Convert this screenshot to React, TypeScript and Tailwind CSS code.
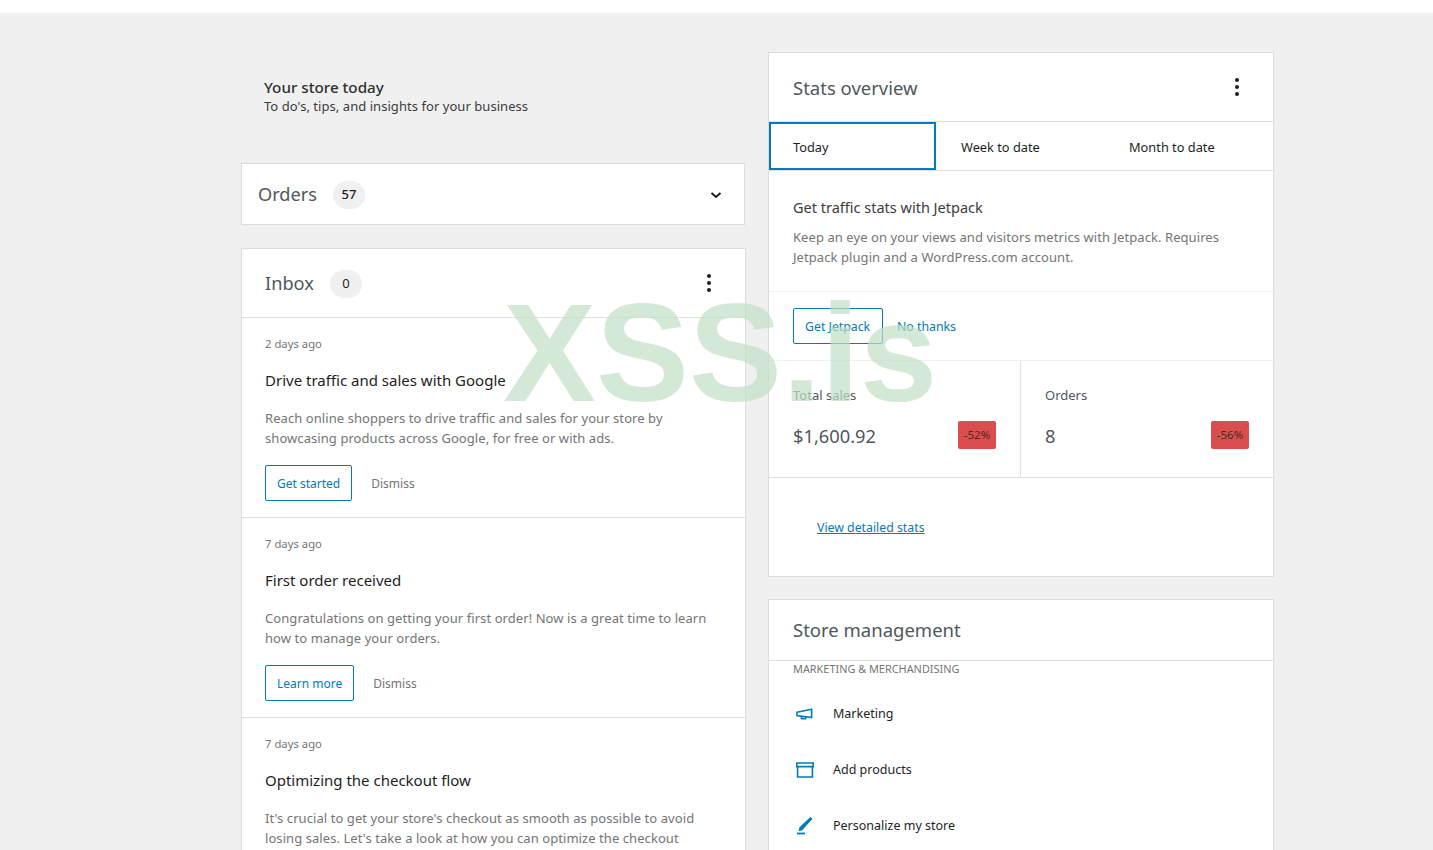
const font = "font-['Noto_Sans','Open_Sans',sans-serif]";

function Kebab() {
  return (
    <div className="flex flex-col gap-[3px] items-center w-6">
      <span className="w-1 h-1 rounded-full bg-[#1e1e1e]" />
      <span className="w-1 h-1 rounded-full bg-[#1e1e1e]" />
      <span className="w-1 h-1 rounded-full bg-[#1e1e1e]" />
    </div>
  );
}

function Note({ age, title, body, action, last }: { age: string; title: string; body: string[]; action?: string; last?: boolean }) {
  return (
    <div className={`h-[200px] pl-[23px] pr-6 pt-[18px] ${last ? "" : "border-b border-[#e0e0e0]"}`}>
      <p className="text-[11.3px] leading-4 text-[#757575]">{age}</p>
      <h3 className="mt-[16px] text-[15px] leading-6 text-[#1e1e1e]">{title}</h3>
      <div className="mt-[16px] text-[13px] tracking-[0.07px] leading-5 text-[#757575]">
        {body.map((line) => (
          <p key={line} className="whitespace-nowrap">{line}</p>
        ))}
      </div>
      {action && (
        <div className="mt-[17px] flex items-center gap-[19px] text-[12px]">
          <a className="h-9 px-[11px] pt-[2px] flex items-center border border-[#007cba] rounded-[2px] text-[#007cba]">{action}</a>
          <a className="pt-[2px] text-[#757575]">Dismiss</a>
        </div>
      )}
    </div>
  );
}

function Stat({ label, value, delta, first }: { label: string; value: string; delta: string; first?: boolean }) {
  return (
    <div className={`h-[116px] px-6 pt-[24px] ${first ? "w-[252px] border-r border-[#e0e0e0]" : "flex-1"}`}>
      <p className="text-[13px] leading-5 text-[#50575e]">{label}</p>
      <div className="mt-[15px] flex items-center justify-between">
        <span className="pt-[2px] text-[18.3px] leading-7 text-[#50575e]">{value}</span>
        <span className="w-[38px] h-7 rounded-[2px] bg-[#db4e50] text-[11.5px] text-[#50281f] flex items-center justify-center">{delta}</span>
      </div>
    </div>
  );
}

function MegaphoneIcon() {
  return (
    <svg width="18" height="12" viewBox="0 0 18 12" fill="none" stroke="#007cba" strokeWidth="1.6">
      <path d="M1 4.2 15.6 1.2V9.6L1 7.6Z" />
      <path d="M5 8.2 5.6 10.6H9.6L10 8.8" />
    </svg>
  );
}

function ArchiveIcon() {
  return (
    <svg width="18" height="16" viewBox="0 0 18 16" fill="none" stroke="#007cba" strokeWidth="1.6">
      <path d="M0.8 1H17.2V4.6H0.8Z" />
      <path d="M1.6 4.6V15H16.4V4.6" />
    </svg>
  );
}

function BrushIcon() {
  return (
    <svg width="16" height="18" viewBox="0 0 16 18" fill="#007cba">
      <path d="M13.4 0 15.6 1.8 7.6 10.6 5.4 13.2 1.6 14.2 2.4 10.4 4.8 8Z" />
      <rect x="0" y="15.6" width="8" height="1.8" />
    </svg>
  );
}

function ManageItem({ icon, label }: { icon: React.ReactNode; label: string }) {
  return (
    <div className="h-14 pl-[27px] flex items-center">
      <div className="w-[18px] flex justify-center">{icon}</div>
      <span className="ml-[19px] text-[12.5px] text-[#1e1e1e]">{label}</span>
    </div>
  );
}

export default function App() {
  return (
    <div className={`relative h-[850px] w-full overflow-hidden bg-[#f0f0f0] ${font}`}>
      <div className="h-[13px] bg-white" />

      <div className="ml-[241px] mt-[39px] flex gap-[22px] items-start">
        {/* left column */}
        <div className="w-[505px]">
          <div className="h-[111px] pl-[23px] pt-[25px]">
            <h2 className="text-[15.2px] leading-5 font-medium text-[#2f2f2f]">Your store today</h2>
            <p className="text-[13px] tracking-[0.05px] leading-[18px] text-[#3c3c3c]">To do's, tips, and insights for your business</p>
          </div>

          <div className="w-[504px] h-[62px] pt-[2px] bg-white border border-[#dcdcde] flex items-center pl-4 pr-4 justify-between">
            <div className="flex items-center gap-4">
              <span className="text-[18.2px] text-[#50575e]">Orders</span>
              <span className="w-8 h-7 rounded-full bg-[#f0f0f0] text-[13px] font-medium text-[#1e1e1e] flex items-center justify-center">57</span>
            </div>
            <svg width="24" height="24" viewBox="0 0 24 24" fill="none" stroke="#1e1e1e" strokeWidth="2">
              <path d="M7.5 10 12 14l4.5-4" />
            </svg>
          </div>

          <div className="mt-[23px] bg-white border border-[#dcdcde]">
            <div className="h-[69px] pl-[23px] pr-6 border-b border-[#e0e0e0] flex items-center justify-between">
              <div className="flex items-center gap-4">
                <span className="pt-[1px] text-[18.2px] text-[#50575e]">Inbox</span>
                <span className="mt-[2px] w-8 h-7 rounded-full bg-[#f0f0f0] text-[13px] text-[#1e1e1e] flex items-center justify-center">0</span>
              </div>
              <Kebab />
            </div>
            <Note
              age="2 days ago"
              title="Drive traffic and sales with Google"
              body={["Reach online shoppers to drive traffic and sales for your store by", "showcasing products across Google, for free or with ads."]}
              action="Get started"
            />
            <Note
              age="7 days ago"
              title="First order received"
              body={["Congratulations on getting your first order! Now is a great time to learn", "how to manage your orders."]}
              action="Learn more"
            />
            <Note
              age="7 days ago"
              title="Optimizing the checkout flow"
              body={["It's crucial to get your store's checkout as smooth as possible to avoid", "losing sales. Let's take a look at how you can optimize the checkout"]}
              last
            />
          </div>
        </div>

        {/* right column */}
        <div className="w-[506px]">
          <div className="bg-white border border-[#dcdcde]">
            <div className="h-[69px] px-6 pt-[2px] flex items-center justify-between border-b border-[#e0e0e0]">
              <h2 className="text-[18.5px] text-[#50575e]">Stats overview</h2>
              <div className="-mt-[2px]">
                <Kebab />
              </div>
            </div>
            <div className="h-[49px] flex border-b border-[#e0e0e0] text-[12.8px] text-[#1e1e1e]">
              <div className="w-[167px] border-2 border-[#007cba] pl-[22px] pt-[3px] flex items-center">Today</div>
              <div className="w-[168px] pl-[25px] pt-[3px] flex items-center">Week to date</div>
              <div className="flex-1 pl-[25px] pt-[3px] flex items-center">Month to date</div>
            </div>
            <div className="h-[121px] px-6 pt-[24px] border-b border-[#f0f0f0]">
              <h3 className="text-[14.5px] leading-6 text-[#3c3c3c]">Get traffic stats with Jetpack</h3>
              <p className="mt-[8px] text-[13px] tracking-[0.07px] leading-5 text-[#757575]">
                <span className="block whitespace-nowrap">Keep an eye on your views and visitors metrics with Jetpack. Requires</span>
                <span className="block whitespace-nowrap">Jetpack plugin and a WordPress.com account.</span>
              </p>
            </div>
            <div className="h-[69px] px-6 flex items-center gap-[14px] border-b border-[#f0f0f0] text-[12.3px] text-[#007cba]">
              <a className="h-9 w-[90px] pt-[3px] pl-[11px] flex items-center border border-[#007cba] rounded-[2px]">Get Jetpack</a>
              <a className="pt-[3px]">No thanks</a>
            </div>
            <div className="flex border-b border-[#e0e0e0]">
              <Stat label="Total sales" value="$1,600.92" delta="-52%" first />
              <Stat label="Orders" value="8" delta="-56%" />
            </div>
            <div className="h-[98px] pl-12 pt-[2px] flex items-center">
              <a className="text-[12.3px] text-[#007cba] underline">View detailed stats</a>
            </div>
          </div>

          <div className="mt-[22px] bg-white border border-[#dcdcde]">
            <div className="h-[61px] px-6 flex items-center border-b border-[#e0e0e0]">
              <h2 className="text-[18.5px] text-[#50575e]">Store management</h2>
            </div>
            <p className="pl-6 text-[10.9px] leading-4 text-[#757575] uppercase">Marketing &amp; Merchandising</p>
            <div className="mt-[9px]">
              <ManageItem icon={<MegaphoneIcon />} label="Marketing" />
              <ManageItem icon={<ArchiveIcon />} label="Add products" />
              <ManageItem icon={<BrushIcon />} label="Personalize my store" />
            </div>
          </div>
        </div>
      </div>

      {/* watermark sits over the page */}
      <div className="absolute left-[503px] top-[273px] pointer-events-none whitespace-nowrap text-[139.5px] leading-[160px] font-bold font-['Liberation_Sans',sans-serif] text-[#c0e0c3]/70">
        XSS.is
      </div>
    </div>
  );
}
